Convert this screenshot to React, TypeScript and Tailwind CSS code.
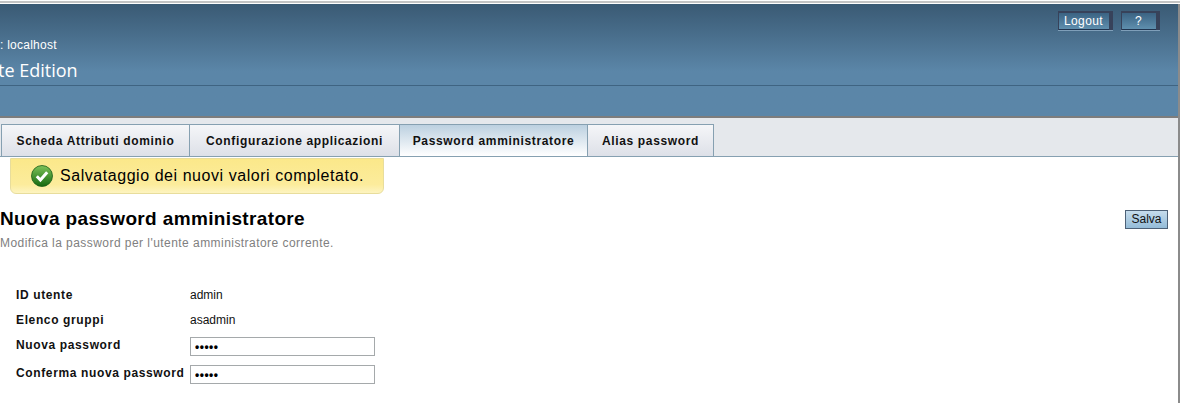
const sans = { fontFamily: '"Liberation Sans", Arial, sans-serif' };

const tabs = [
  { label: "Scheda Attributi dominio", width: "w-[189px]", active: false },
  { label: "Configurazione applicazioni", width: "w-[211px]", active: false },
  { label: "Password amministratore", width: "w-[189px]", active: true },
  { label: "Alias password", width: "w-[127px]", active: false },
];

function MastheadButton({ label, width }: { label: string; width: string }) {
  return (
    <div className="flex border-b border-[#7f9fb9] bg-[#37425a] pt-[2px] pr-[4px] pl-[1px]">
      <button
        className={`h-[17px] ${width} border-b border-[#20344f] bg-gradient-to-b from-[#3b6383] to-[#5f8fae] pr-[1px] text-center text-[12px] leading-[17px] tracking-[0.4px] text-white`}
      >
        {label}
      </button>
    </div>
  );
}

function Row({ label, height, children }: { label: string; height: string; children: React.ReactNode }) {
  return (
    <div className={`flex ${height} items-start pl-[16px]`}>
      <div className="mt-[1px] w-[174px] text-[12px] leading-[14px] font-bold tracking-[0.63px] whitespace-nowrap text-[#111]">
        {label}
      </div>
      {children}
    </div>
  );
}

function PasswordInput() {
  return (
    <input
      type="text"
      readOnly
      value="•••••"
      className="h-[19px] w-[185px] border border-[#a5a9ab] bg-white px-[4px] text-[12px] leading-none font-bold tracking-[0.5px] text-black outline-none"
    />
  );
}

export default function App() {
  return (
    <div className="h-[403px] w-[1181px] overflow-hidden bg-white pr-[1px]" style={sans}>
      <div className="h-[1px] bg-white" />
      <div className="h-[2px] bg-[#c4c4c4]" />
      <div className="h-[1px] bg-white" />
      <div className="flex h-[399px] flex-col border-r-[2px] border-[#8b8b8b]">
        <header className="h-[114px] border-b-[2px] border-[#7d7d7d] bg-gradient-to-b from-[#3a5a74] via-[#5b86a8] via-60% to-[#5b86a8]">
          <div className="relative h-[81px]">
            <div className="flex justify-end gap-[8px] pt-[7px] pr-[18px]">
              <MastheadButton label="Logout" width="w-[50px]" />
              <MastheadButton label="?" width="w-[34px]" />
            </div>
            <div className="absolute top-[34px] left-[0px] text-[12px] leading-[14px] tracking-[0.25px] text-white">
              : localhost
            </div>
            <div
              className="absolute top-[55px] left-[-2px] text-[18px] leading-[22px] font-medium text-white"
              style={{ fontFamily: '"Open Sans", sans-serif' }}
            >
              te Edition
            </div>
          </div>
          <div className="h-[1px] bg-[#3f6482]" />
        </header>

        <nav className="flex h-[39px] items-end border-b border-[#86a0b1] bg-[#e5e8ec] pl-[1px]">
          {tabs.map((tab) => (
            <div
              key={tab.label}
              className={`-mb-[1px] -ml-[1px] h-[33px] ${tab.width} first:ml-0 border border-[#86a0b1] bg-gradient-to-b text-center text-[12px] leading-[32px] font-bold tracking-[0.65px] whitespace-nowrap text-[#111] ${
                tab.active ? "from-[#bcd0e0] to-white" : "from-[#f5f6f8] to-[#dde0e8]"
              }`}
            >
              {tab.label}
            </div>
          ))}
        </nav>

        <main className="flex flex-col">
          <div className="mt-[1px] ml-[10px] flex h-[36px] w-[374px] items-center gap-[7px] rounded-b-[6px] border border-[#e8dd9c] bg-gradient-to-b from-[#fbe88a] via-[#fcec9c] via-75% to-[#fdf4c0] pl-[20px] text-[16px] tracking-[0.55px] whitespace-nowrap text-black">
            <svg width="22" height="22" viewBox="0 0 22 22" className="shrink-0">
              <defs>
                <linearGradient id="ok" x1="0" y1="0" x2="0" y2="1">
                  <stop offset="0" stopColor="#7fc35a" />
                  <stop offset="1" stopColor="#14690f" />
                </linearGradient>
              </defs>
              <circle cx="11" cy="11" r="10.5" fill="url(#ok)" stroke="#1b5d18" strokeWidth="0.8" />
              <path d="M5.8 11.3 L9.4 15 L16.2 7.2" fill="none" stroke="#fff" strokeWidth="3" />
            </svg>
            <span>Salvataggio dei nuovi valori completato.</span>
          </div>

          <div className="mt-[14px] flex items-start justify-between pr-[10px]">
            <div>
              <h1 className="text-[19px] leading-[21px] font-bold tracking-[0.36px] whitespace-nowrap text-black">
                Nuova password amministratore
              </h1>
              <p className="mt-[7px] text-[12px] leading-[14px] tracking-[0.45px] whitespace-nowrap text-[#808080]">
                Modifica la password per l'utente amministratore corrente.
              </p>
            </div>
            <button className="mt-[2px] h-[19px] w-[43px] border border-[#4d6177] bg-gradient-to-b from-[#c6dcec] to-[#94bcd8] text-center text-[12px] leading-[17px] text-[#111]">
              Salva
            </button>
          </div>

          <div className="mt-[37px] flex flex-col">
            <Row label="ID utente" height="h-[25px]">
              <span className="mt-[1px] text-[12px] leading-[14px] text-[#111]">admin</span>
            </Row>
            <Row label="Elenco gruppi" height="h-[25px]">
              <span className="mt-[1px] text-[12px] leading-[14px] text-[#111]">asadmin</span>
            </Row>
            <Row label="Nuova password" height="h-[28px]">
              <PasswordInput />
            </Row>
            <Row label="Conferma nuova password" height="h-[28px]">
              <PasswordInput />
            </Row>
          </div>
        </main>
      </div>
    </div>
  );
}
